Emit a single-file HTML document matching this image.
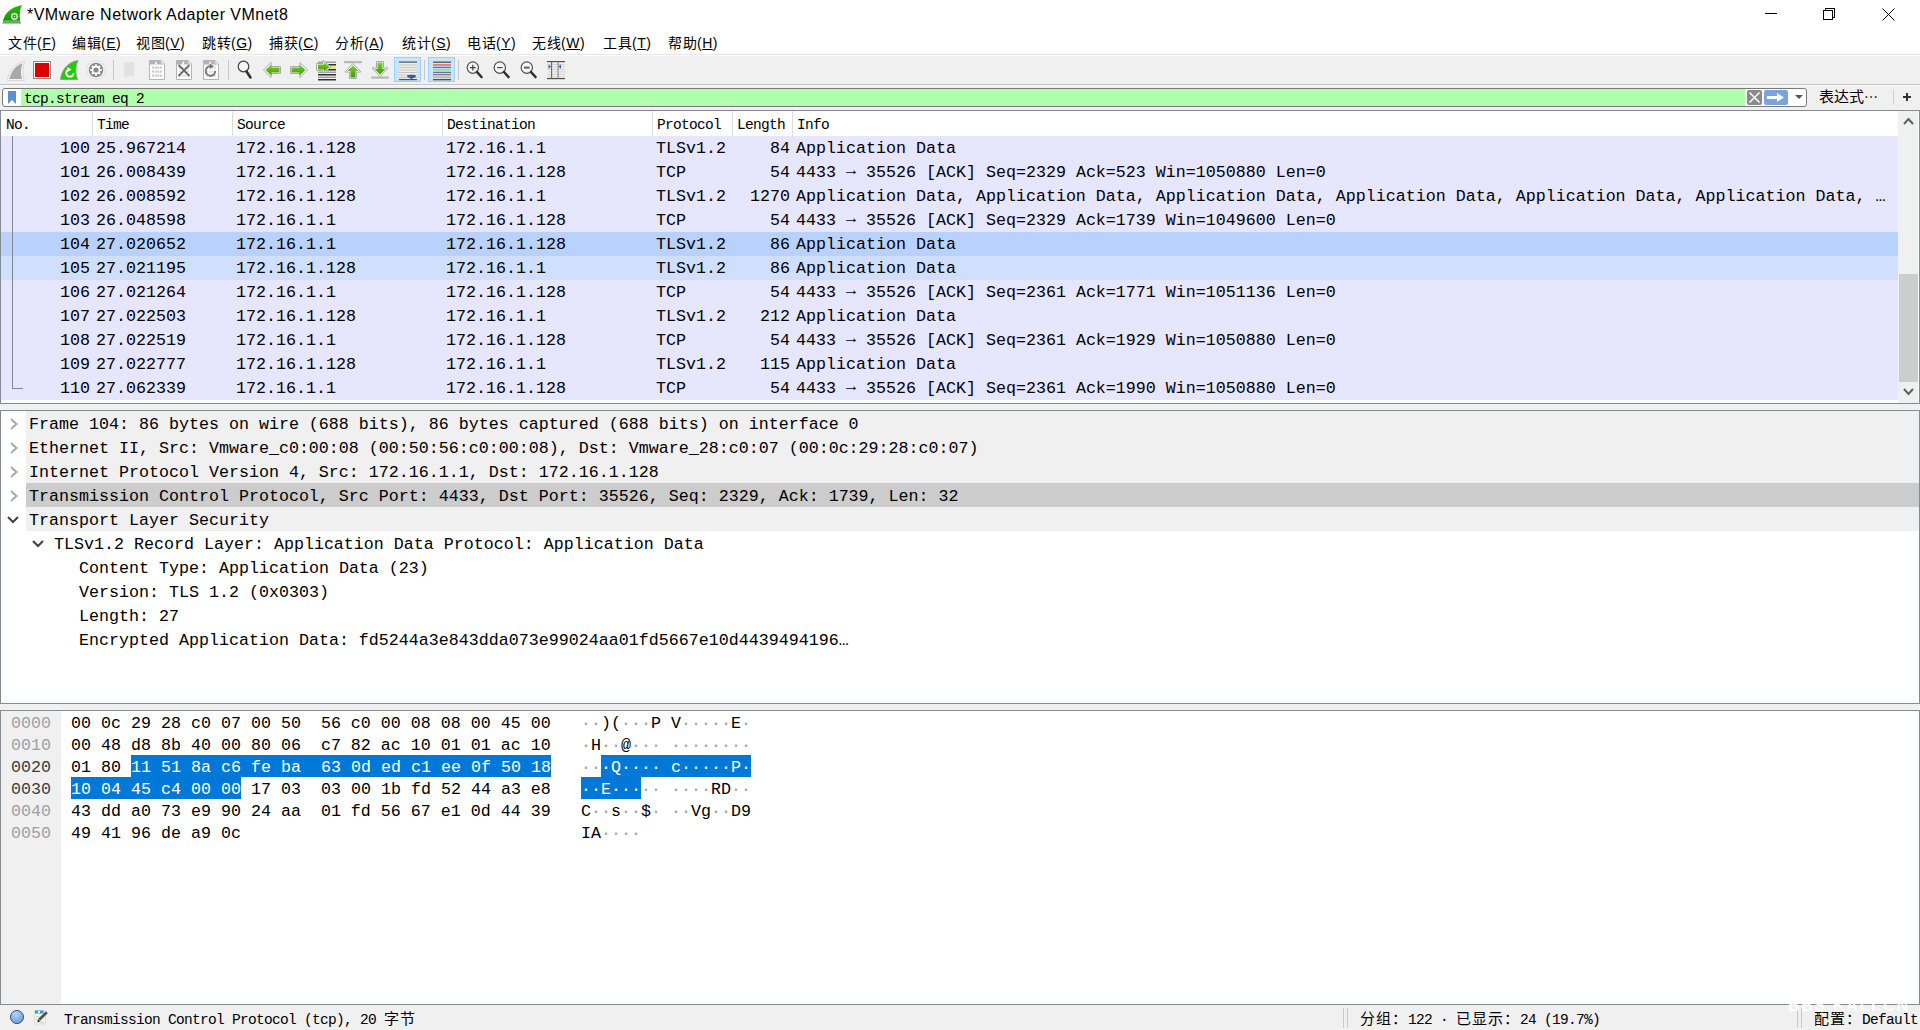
<!DOCTYPE html>
<html lang="zh-CN"><head><meta charset="utf-8"><title>Wireshark</title>
<style>
*{margin:0;padding:0;box-sizing:border-box}
html,body{width:1920px;height:1030px;overflow:hidden;background:#f0f0f0}
body{position:relative;font-family:"Liberation Sans",sans-serif;color:#000}
.a{position:absolute}
.mono{font-family:"Liberation Mono",monospace;font-size:16.664px;line-height:24px;white-space:pre}
.cj{font-size:15px;letter-spacing:1px}
.hdr{font-family:"Liberation Mono",monospace;font-size:14.5px;letter-spacing:-0.7px;line-height:24px;white-space:pre}
.menu span{position:absolute;top:31px;line-height:24px;font-size:14px;letter-spacing:0.5px;white-space:pre}
.menu u{text-decoration:underline;text-underline-offset:1px;text-decoration-thickness:1px}
.row{position:absolute;left:1px;width:1897px;height:24px;background:#e7e6ff}
.row div{position:absolute;top:1px}
.sep{position:absolute;width:1px;background:#dcdcdc}
.drow{position:absolute;left:1px;width:1918px;height:24px}
.hx{position:absolute;left:71px;height:22px;line-height:22px}
</style></head><body>

<div class="a" style="left:0;top:0;width:1920px;height:54px;background:#fff"></div>
<svg class="a" style="left:2px;top:4px" width="22" height="22" viewBox="0 0 22 22">
<defs><linearGradient id="lg" x1="0" y1="0" x2="0" y2="1"><stop offset="0" stop-color="#2cb80c"/><stop offset="0.82" stop-color="#169a06"/><stop offset="0.86" stop-color="#78c070"/><stop offset="1" stop-color="#5a9a50"/></linearGradient></defs>
<path d="M0.5 19.5 C1.5 11 7 3.5 20 1 C17.5 6 17 13 19 19.5 Z" fill="url(#lg)"/>
<circle cx="12.5" cy="12.5" r="2.8" fill="none" stroke="#cfe8cc" stroke-width="1.3"/>
<g fill="#cfe8cc"><rect x="12" y="8.8" width="1" height="7.4"/><rect x="8.8" y="12" width="7.4" height="1"/><rect x="12" y="8.8" width="1" height="7.4" transform="rotate(45 12.5 12.5)"/><rect x="12" y="8.8" width="1" height="7.4" transform="rotate(-45 12.5 12.5)"/></g>
<circle cx="12.5" cy="12.5" r="1.8" fill="#1e9a10"/><circle cx="12.5" cy="12.5" r="0.7" fill="#e8f6e8"/>
</svg>
<div class="a" style="left:27px;top:5px;font-size:16px;line-height:20px;letter-spacing:0.47px;white-space:pre">*VMware Network Adapter VMnet8</div>
<div class="a" style="left:1765px;top:13px;width:12px;height:1px;background:#000"></div>
<div class="a" style="left:1825px;top:8px;width:10px;height:10px;border:1px solid #000"></div>
<div class="a" style="left:1823px;top:10px;width:10px;height:10px;border:1px solid #000;background:#fff"></div>
<svg class="a" style="left:1882px;top:8px" width="13" height="13" viewBox="0 0 13 13"><path d="M0.5 0.5L12.5 12.5M12.5 0.5L0.5 12.5" stroke="#000" stroke-width="1"/></svg>

<div class="menu">
<span style="left:8px">文件(<u>F</u>)</span>
<span style="left:72px">编辑(<u>E</u>)</span>
<span style="left:136px">视图(<u>V</u>)</span>
<span style="left:202px">跳转(<u>G</u>)</span>
<span style="left:269px">捕获(<u>C</u>)</span>
<span style="left:335px">分析(<u>A</u>)</span>
<span style="left:402px">统计(<u>S</u>)</span>
<span style="left:467px">电话(<u>Y</u>)</span>
<span style="left:532px">无线(<u>W</u>)</span>
<span style="left:603px">工具(<u>T</u>)</span>
<span style="left:668px">帮助(<u>H</u>)</span>
</div>
<div class="a" style="left:0;top:54px;width:1920px;height:1px;background:#e8e8e8"></div>
<div class="a" style="left:0;top:55px;width:1920px;height:1px;background:#fcfcfc"></div>
<div class="a" style="left:0;top:56px;width:1920px;height:54px;background:#f0f0f0"></div>
<div class="a" style="left:0;top:84px;width:1920px;height:1px;background:#c4c4c4"></div>
<svg class="a" style="left:0;top:54px" width="580" height="32" viewBox="0 54 580 32">
<defs>
<linearGradient id="gg" x1="0" y1="0" x2="0" y2="1"><stop offset="0" stop-color="#7fcf2f"/><stop offset="1" stop-color="#3f9a00"/></linearGradient>
<linearGradient id="gh" x1="0" y1="0" x2="1" y2="0"><stop offset="0" stop-color="#4fa80a"/><stop offset="1" stop-color="#78c52a"/></linearGradient>
</defs>
<!-- 1 gray fin -->
<path d="M7.5 80.5 C8.5 71 15 63 25 61.5 C22.5 67 22 74 24.5 80.5 Z" fill="#f4f4f4" stroke="#d8d8d8" stroke-width="1"/>
<path d="M9.5 79 C11 71.5 16 65 22.5 63.5 C20.5 68.5 20.5 74 22 79 Z" fill="#a8a8a8"/>
<!-- 2 stop -->
<rect x="33.5" y="61.5" width="17" height="17" fill="#f8f8f8" stroke="#8a8a8a" stroke-width="1"/>
<rect x="35" y="63" width="14" height="14" fill="#dd0000"/>
<!-- 3 green fin -->
<path d="M60.5 79.5 C61.5 70 68 62 78 60.5 C75.5 66 75 73 77.5 79.5 Z" fill="#22cc00" stroke="#9a9a9a" stroke-width="1"/>
<path d="M73.5 73 A3.6 3.6 0 1 1 69 69.6" fill="none" stroke="#fff" stroke-width="1.8"/>
<path d="M67.5 67 L71.5 69.5 L67.5 72 Z" fill="#fff"/>
<!-- 4 gear -->
<circle cx="96" cy="70" r="9.3" fill="#f4f4f4" stroke="#d8d8d8" stroke-width="0.8"/>
<circle cx="96" cy="70" r="7.3" fill="#8a8a8a"/>
<g fill="#fff"><circle cx="96" cy="70" r="4.2"/>
<rect x="95" y="64.3" width="2" height="11.4"/><rect x="90.3" y="69" width="11.4" height="2"/>
<rect x="95" y="64.3" width="2" height="11.4" transform="rotate(45 96 70)"/><rect x="95" y="64.3" width="2" height="11.4" transform="rotate(-45 96 70)"/></g>
<circle cx="96" cy="70" r="2.6" fill="#8a8a8a"/>
<!-- sep -->
<rect x="113" y="60" width="1" height="20" fill="#c8c8c8"/>
<!-- 6 disabled folder -->
<path d="M124 62 H134 V76 H128 L124 78 Z" fill="#e2e2e2"/>
<!-- docs -->
<g><path d="M149.5 60.5 H161 L164.5 64 V79.5 H149.5 Z" fill="#fff" stroke="#b4b4b4" stroke-width="1"/><path d="M150 61 H160.8 L162.5 62.7 V64.5 H150 Z" fill="#b4b4b4"/><path d="M155 64.5 Q155 61.5 157 61.5 L157 64.5 Z" fill="#fff"/><path d="M161 60.5 V64 H164.5" fill="#e8e8e8" stroke="#c0c0c0" stroke-width="0.8"/><rect x="152.2" y="66.5" width="1.8" height="2.2" fill="#c4c4c4"/><rect x="154.79999999999998" y="66.5" width="1.8" height="2.2" fill="#c4c4c4"/><rect x="157.39999999999998" y="66.5" width="1.8" height="2.2" fill="#c4c4c4"/><rect x="160.0" y="66.5" width="1.8" height="2.2" fill="#c4c4c4"/><rect x="152.2" y="70.5" width="1.8" height="2.2" fill="#c4c4c4"/><rect x="154.79999999999998" y="70.5" width="1.8" height="2.2" fill="#c4c4c4"/><rect x="157.39999999999998" y="70.5" width="1.8" height="2.2" fill="#c4c4c4"/><rect x="160.0" y="70.5" width="1.8" height="2.2" fill="#c4c4c4"/><rect x="152.2" y="74.5" width="1.8" height="2.2" fill="#c4c4c4"/><rect x="154.79999999999998" y="74.5" width="1.8" height="2.2" fill="#c4c4c4"/><rect x="157.39999999999998" y="74.5" width="1.8" height="2.2" fill="#c4c4c4"/><rect x="160.0" y="74.5" width="1.8" height="2.2" fill="#c4c4c4"/></g>
<g><path d="M176.5 60.5 H188 L191.5 64 V79.5 H176.5 Z" fill="#fff" stroke="#b4b4b4" stroke-width="1"/><path d="M177 61 H187.8 L189.5 62.7 V64.5 H177 Z" fill="#b4b4b4"/><path d="M182 64.5 Q182 61.5 184 61.5 L184 64.5 Z" fill="#fff"/><path d="M188 60.5 V64 H191.5" fill="#e8e8e8" stroke="#c0c0c0" stroke-width="0.8"/><rect x="179.2" y="66.5" width="1.8" height="2.2" fill="#dadada"/><rect x="181.79999999999998" y="66.5" width="1.8" height="2.2" fill="#dadada"/><rect x="184.39999999999998" y="66.5" width="1.8" height="2.2" fill="#dadada"/><rect x="187.0" y="66.5" width="1.8" height="2.2" fill="#dadada"/><rect x="179.2" y="70.5" width="1.8" height="2.2" fill="#dadada"/><rect x="181.79999999999998" y="70.5" width="1.8" height="2.2" fill="#dadada"/><rect x="184.39999999999998" y="70.5" width="1.8" height="2.2" fill="#dadada"/><rect x="187.0" y="70.5" width="1.8" height="2.2" fill="#dadada"/><rect x="179.2" y="74.5" width="1.8" height="2.2" fill="#dadada"/><rect x="181.79999999999998" y="74.5" width="1.8" height="2.2" fill="#dadada"/><rect x="184.39999999999998" y="74.5" width="1.8" height="2.2" fill="#dadada"/><rect x="187.0" y="74.5" width="1.8" height="2.2" fill="#dadada"/><path d="M178.5 65 L189.5 76 M189.5 65 L178.5 76" stroke="#6a6a6a" stroke-width="1.8"/></g>
<g><path d="M203.5 60.5 H215 L218.5 64 V79.5 H203.5 Z" fill="#fff" stroke="#b4b4b4" stroke-width="1"/><path d="M204 61 H214.8 L216.5 62.7 V64.5 H204 Z" fill="#b4b4b4"/><path d="M209 64.5 Q209 61.5 211 61.5 L211 64.5 Z" fill="#fff"/><path d="M215 60.5 V64 H218.5" fill="#e8e8e8" stroke="#c0c0c0" stroke-width="0.8"/><rect x="206.2" y="66.5" width="1.8" height="2.2" fill="#dadada"/><rect x="208.79999999999998" y="66.5" width="1.8" height="2.2" fill="#dadada"/><rect x="211.39999999999998" y="66.5" width="1.8" height="2.2" fill="#dadada"/><rect x="214.0" y="66.5" width="1.8" height="2.2" fill="#dadada"/><rect x="206.2" y="70.5" width="1.8" height="2.2" fill="#dadada"/><rect x="208.79999999999998" y="70.5" width="1.8" height="2.2" fill="#dadada"/><rect x="211.39999999999998" y="70.5" width="1.8" height="2.2" fill="#dadada"/><rect x="214.0" y="70.5" width="1.8" height="2.2" fill="#dadada"/><rect x="206.2" y="74.5" width="1.8" height="2.2" fill="#dadada"/><rect x="208.79999999999998" y="74.5" width="1.8" height="2.2" fill="#dadada"/><rect x="211.39999999999998" y="74.5" width="1.8" height="2.2" fill="#dadada"/><rect x="214.0" y="74.5" width="1.8" height="2.2" fill="#dadada"/><path d="M215.3 71 A4.8 4.8 0 1 1 211.5 66.3" fill="none" stroke="#777" stroke-width="1.8"/><path d="M209.5 63.5 L214 66.2 L210 69 Z" fill="#777"/></g>
<rect x="228" y="60" width="1" height="20" fill="#c8c8c8"/>
<!-- 11 magnifier -->
<circle cx="243.5" cy="66.5" r="5.3" fill="#f6f6f6" stroke="#404040" stroke-width="1.2"/>
<path d="M246.5 71.5 L250.5 77.5" stroke="#303030" stroke-width="2.6" stroke-linecap="round"/>
<!-- 12 left arrow -->
<path d="M263.5 70 L271 62.5 V66.5 H280.5 V73.5 H271 V77.5 Z" fill="#fafafa" stroke="#aaa" stroke-width="1"/>
<path d="M265.5 70 L271.5 64.5 V67.5 H279.5 V72.5 H271.5 V75.5 Z" fill="url(#gg)"/>
<!-- 13 right arrow -->
<path d="M307.5 70 L300 62.5 V66.5 H290.5 V73.5 H300 V77.5 Z" fill="#fafafa" stroke="#aaa" stroke-width="1"/>
<path d="M305.5 70 L299.5 64.5 V67.5 H291.5 V72.5 H299.5 V75.5 Z" fill="url(#gg)"/>
<!-- 14 go to packet -->
<g>
<rect x="318" y="61.5" width="18" height="1.5" fill="#a0a0a0"/>
<rect x="318" y="64" width="18" height="1.5" fill="#303030"/>
<rect x="330" y="66.5" width="6" height="2" fill="#f0e040"/>
<rect x="318" y="69" width="18" height="1.5" fill="#303030"/>
<rect x="318" y="71.5" width="18" height="1.5" fill="#a0a0a0"/>
<rect x="318" y="74" width="18" height="1.5" fill="#303030"/>
<rect x="318" y="76.5" width="18" height="1.5" fill="#a0a0a0"/>
<rect x="318" y="79" width="18" height="1.5" fill="#303030"/>
<path d="M316.5 63.5 H323 V60.5 L331 67 L323 73.5 V70.5 H316.5 Z" fill="#fafafa" stroke="#aaa" stroke-width="1"/>
<path d="M318 64.5 H324 V62.5 L329.5 67 L324 71.5 V69.5 H318 Z" fill="url(#gg)"/>
</g>
<!-- 15 to top -->
<rect x="344" y="61" width="18" height="2.2" rx="1" fill="#b8b8b8"/>
<path d="M353 63.5 L361 72 H356.5 V78.5 H349.5 V72 H345 Z" fill="#fafafa" stroke="#aaa" stroke-width="1"/>
<path d="M353 65.5 L358.5 71 H355.5 V77.5 H350.5 V71 H347.5 Z" fill="url(#gg)"/>
<!-- 16 to bottom -->
<rect x="371" y="76.5" width="18" height="2.2" rx="1" fill="#b8b8b8"/>
<path d="M380 76.5 L388 68 H383.5 V61.5 H376.5 V68 H372 Z" fill="#fafafa" stroke="#aaa" stroke-width="1"/>
<path d="M380 74.5 L385.5 69 H382.5 V62.5 H377.5 V69 H374.5 Z" fill="url(#gg)"/>
<!-- 17 autoscroll pressed -->
<rect x="394.5" y="57.5" width="26" height="24" fill="#cce4f7" stroke="#99d1ff" stroke-width="1"/>
<g>
<rect x="399" y="61.5" width="18" height="1.2" fill="#505050"/>
<rect x="399" y="63" width="18" height="16" fill="#f0f0ea"/>
<g fill="#c4c4bc"><rect x="399" y="64.5" width="18" height="1"/><rect x="399" y="67" width="18" height="1"/><rect x="399" y="69.5" width="18" height="1"/><rect x="399" y="72" width="18" height="1"/><rect x="399" y="74.5" width="18" height="1"/><rect x="399" y="77" width="18" height="1"/></g>
<rect x="399" y="79" width="18" height="1.2" fill="#505050"/>
<path d="M407 76 Q407 74.8 411.5 74.8 Q416 74.8 416 76 Q416 77.5 412.5 78.2 L412.5 80 H410.5 L410.5 78.2 Q407 77.5 407 76 Z" fill="#2e5fa8"/>
</g>
<rect x="424" y="60" width="1" height="20" fill="#c8c8c8"/>
<!-- 19 colorize pressed -->
<rect x="428.5" y="57.5" width="26" height="24" fill="#cce4f7" stroke="#99d1ff" stroke-width="1"/>
<rect x="433" y="61.5" width="18" height="1.3" fill="#505050"/>
<rect x="433" y="64.3" width="18" height="1.3" fill="#ee5050"/>
<rect x="433" y="66.8" width="18" height="1.3" fill="#4a78c0"/>
<rect x="433" y="69.3" width="18" height="1.3" fill="#8ee050"/>
<rect x="433" y="71.8" width="18" height="1.3" fill="#4a78c0"/>
<rect x="433" y="74" width="18" height="1.3" fill="#9a70a8"/>
<rect x="433" y="76.5" width="18" height="1.3" fill="#d8b040"/>
<rect x="433" y="79" width="18" height="1.3" fill="#505050"/>
<rect x="458" y="60" width="1" height="20" fill="#c8c8c8"/>
<!-- 21 zoom in -->
<circle cx="472.8" cy="67.6" r="5.7" fill="#f4f4f4" stroke="#505050" stroke-width="1.2"/>
<path d="M470 67.6 H475.6 M472.8 64.8 V70.4" stroke="#404040" stroke-width="1.2"/>
<path d="M477 72 L481.5 77" stroke="#303030" stroke-width="2.6" stroke-linecap="round"/>
<!-- 22 zoom out -->
<circle cx="499.8" cy="67.6" r="5.7" fill="#f4f4f4" stroke="#505050" stroke-width="1.2"/>
<path d="M497 67.6 H502.6" stroke="#505050" stroke-width="1.2"/>
<path d="M504 72 L508.5 77" stroke="#303030" stroke-width="2.6" stroke-linecap="round"/>
<!-- 23 normal -->
<circle cx="526.8" cy="67.6" r="5.7" fill="#f4f4f4" stroke="#505050" stroke-width="1.2"/>
<rect x="524" y="66.6" width="5.6" height="2" fill="#606060"/>
<path d="M531 72 L535.5 77" stroke="#303030" stroke-width="2.6" stroke-linecap="round"/>
<!-- 24 resize columns -->
<rect x="547" y="61.5" width="18" height="17" fill="#f0f0ea"/>
<g fill="#d0d0c8"><rect x="547" y="64" width="18" height="0.8"/><rect x="547" y="66.5" width="18" height="0.8"/><rect x="547" y="69" width="18" height="0.8"/><rect x="547" y="71.5" width="18" height="0.8"/><rect x="547" y="74" width="18" height="0.8"/><rect x="547" y="76.5" width="18" height="0.8"/></g>
<rect x="547" y="61" width="18" height="1.2" fill="#505050"/>
<rect x="547" y="78" width="18" height="1.2" fill="#505050"/>
<rect x="551.2" y="61" width="0.9" height="18" fill="#505050"/>
<rect x="557.6" y="61" width="0.9" height="18" fill="#707070"/>
<path d="M548.5 64.5 L551 66.5 L548.5 69 Z" fill="#2e68c0"/>
<path d="M561 64.5 L558.5 66.5 L561 69 Z" fill="#2e68c0"/>
</svg>

<div class="a" style="left:0;top:85px;width:1920px;height:1px;background:#fafafa"></div>
<div class="a" style="left:2px;top:88px;width:1805px;height:19px;border:1px solid #7a7a7a;border-radius:3px;background:#fff;overflow:hidden">
<div class="a" style="left:18px;top:0;width:1724px;height:17px;background:#afffaf"></div>
<svg class="a" style="left:4px;top:1px" width="10" height="16" viewBox="0 0 10 16"><path d="M1 1H9V14L5 10L1 14Z" fill="#5b8fcf"/></svg>
<div class="a hdr" style="left:21px;top:-2px">tcp.stream eq 2</div>
<div class="a" style="left:1744px;top:1px;width:15px;height:15px;background:#8a8a8a;border-radius:2px"></div>
<svg class="a" style="left:1744px;top:1px" width="15" height="15" viewBox="0 0 15 15"><path d="M2.5 2.5L12.5 12.5M12.5 2.5L2.5 12.5" stroke="#fff" stroke-width="1.5"/></svg>
<div class="a" style="left:1761px;top:1px;width:24px;height:15px;background:#79a5dc;border-radius:2px"></div>
<svg class="a" style="left:1761px;top:1px" width="24" height="15" viewBox="0 0 24 15"><path d="M3 6H13V3L20 7.5L13 12V9H3Z" fill="#fff"/></svg>
<svg class="a" style="left:1792px;top:6px" width="8" height="5" viewBox="0 0 8 5"><path d="M0 0H8L4 4Z" fill="#555"/></svg>
</div>
<div class="a" style="left:1819px;top:86px;font-size:15px;line-height:22px;white-space:pre">表达式<span style="font-size:14px">⋯</span></div>
<div class="a" style="left:1893px;top:90px;width:1px;height:15px;background:#d0d0d0"></div>
<svg class="a" style="left:1902px;top:92px" width="10" height="10" viewBox="0 0 10 10"><path d="M5 1V9M1 5H9" stroke="#333" stroke-width="2"/></svg>

<div class="a" style="left:0;top:110px;width:1920px;height:294px;border:1px solid #868a91;background:#fff"></div>
<div class="a hdr" style="left:6px;top:113px">No.</div>
<div class="a hdr" style="left:97px;top:113px">Time</div>
<div class="sep" style="left:92px;top:111px;height:25px"></div>
<div class="a hdr" style="left:237px;top:113px">Source</div>
<div class="sep" style="left:232px;top:111px;height:25px"></div>
<div class="a hdr" style="left:447px;top:113px">Destination</div>
<div class="sep" style="left:442px;top:111px;height:25px"></div>
<div class="a hdr" style="left:657px;top:113px">Protocol</div>
<div class="sep" style="left:652px;top:111px;height:25px"></div>
<div class="a hdr" style="left:737px;top:113px">Length</div>
<div class="sep" style="left:732px;top:111px;height:25px"></div>
<div class="a hdr" style="left:797px;top:113px">Info</div>
<div class="sep" style="left:792px;top:111px;height:25px"></div>
<div class="row mono" style="top:136px;background:#e7e6ff">
<div style="right:1808px">100</div>
<div style="left:95px">25.967214</div>
<div style="left:235px">172.16.1.128</div>
<div style="left:445px">172.16.1.1</div>
<div style="left:655px">TLSv1.2</div>
<div style="right:1108px">84</div>
<div style="left:795px">Application Data</div>
</div>
<div class="row mono" style="top:160px;background:#e7e6ff">
<div style="right:1808px">101</div>
<div style="left:95px">26.008439</div>
<div style="left:235px">172.16.1.1</div>
<div style="left:445px">172.16.1.128</div>
<div style="left:655px">TCP</div>
<div style="right:1108px">54</div>
<div style="left:795px">4433 <span style="position:relative;top:-2px">→</span> 35526 [ACK] Seq=2329 Ack=523 Win=1050880 Len=0</div>
</div>
<div class="row mono" style="top:184px;background:#e7e6ff">
<div style="right:1808px">102</div>
<div style="left:95px">26.008592</div>
<div style="left:235px">172.16.1.128</div>
<div style="left:445px">172.16.1.1</div>
<div style="left:655px">TLSv1.2</div>
<div style="right:1108px">1270</div>
<div style="left:795px">Application Data, Application Data, Application Data, Application Data, Application Data, Application Data, …</div>
</div>
<div class="row mono" style="top:208px;background:#e7e6ff">
<div style="right:1808px">103</div>
<div style="left:95px">26.048598</div>
<div style="left:235px">172.16.1.1</div>
<div style="left:445px">172.16.1.128</div>
<div style="left:655px">TCP</div>
<div style="right:1108px">54</div>
<div style="left:795px">4433 <span style="position:relative;top:-2px">→</span> 35526 [ACK] Seq=2329 Ack=1739 Win=1049600 Len=0</div>
</div>
<div class="row mono" style="top:232px;background:#b9d2fd">
<div style="right:1808px">104</div>
<div style="left:95px">27.020652</div>
<div style="left:235px">172.16.1.1</div>
<div style="left:445px">172.16.1.128</div>
<div style="left:655px">TLSv1.2</div>
<div style="right:1108px">86</div>
<div style="left:795px">Application Data</div>
</div>
<div class="row mono" style="top:256px;background:#cfdffd">
<div style="right:1808px">105</div>
<div style="left:95px">27.021195</div>
<div style="left:235px">172.16.1.128</div>
<div style="left:445px">172.16.1.1</div>
<div style="left:655px">TLSv1.2</div>
<div style="right:1108px">86</div>
<div style="left:795px">Application Data</div>
</div>
<div class="row mono" style="top:280px;background:#e7e6ff">
<div style="right:1808px">106</div>
<div style="left:95px">27.021264</div>
<div style="left:235px">172.16.1.1</div>
<div style="left:445px">172.16.1.128</div>
<div style="left:655px">TCP</div>
<div style="right:1108px">54</div>
<div style="left:795px">4433 <span style="position:relative;top:-2px">→</span> 35526 [ACK] Seq=2361 Ack=1771 Win=1051136 Len=0</div>
</div>
<div class="row mono" style="top:304px;background:#e7e6ff">
<div style="right:1808px">107</div>
<div style="left:95px">27.022503</div>
<div style="left:235px">172.16.1.128</div>
<div style="left:445px">172.16.1.1</div>
<div style="left:655px">TLSv1.2</div>
<div style="right:1108px">212</div>
<div style="left:795px">Application Data</div>
</div>
<div class="row mono" style="top:328px;background:#e7e6ff">
<div style="right:1808px">108</div>
<div style="left:95px">27.022519</div>
<div style="left:235px">172.16.1.1</div>
<div style="left:445px">172.16.1.128</div>
<div style="left:655px">TCP</div>
<div style="right:1108px">54</div>
<div style="left:795px">4433 <span style="position:relative;top:-2px">→</span> 35526 [ACK] Seq=2361 Ack=1929 Win=1050880 Len=0</div>
</div>
<div class="row mono" style="top:352px;background:#e7e6ff">
<div style="right:1808px">109</div>
<div style="left:95px">27.022777</div>
<div style="left:235px">172.16.1.128</div>
<div style="left:445px">172.16.1.1</div>
<div style="left:655px">TLSv1.2</div>
<div style="right:1108px">115</div>
<div style="left:795px">Application Data</div>
</div>
<div class="row mono" style="top:376px;background:#e7e6ff">
<div style="right:1808px">110</div>
<div style="left:95px">27.062339</div>
<div style="left:235px">172.16.1.1</div>
<div style="left:445px">172.16.1.128</div>
<div style="left:655px">TCP</div>
<div style="right:1108px">54</div>
<div style="left:795px">4433 <span style="position:relative;top:-2px">→</span> 35526 [ACK] Seq=2361 Ack=1990 Win=1050880 Len=0</div>
</div>
<div class="a" style="left:12px;top:136px;width:1px;height:253px;background:#7f888f"></div>
<div class="a" style="left:12px;top:388px;width:11px;height:1px;background:#7f888f"></div>
<div class="a" style="left:1898px;top:111px;width:20px;height:292px;background:#f0f0f0"></div>
<div class="a" style="left:1899px;top:274px;width:19px;height:108px;background:#cdcdcd"></div>
<svg class="a" style="left:1903px;top:117px" width="11" height="8" viewBox="0 0 11 8"><path d="M1 7L5.5 2L10 7" fill="none" stroke="#606060" stroke-width="2"/></svg>
<svg class="a" style="left:1903px;top:388px" width="11" height="8" viewBox="0 0 11 8"><path d="M1 1L5.5 6L10 1" fill="none" stroke="#606060" stroke-width="2"/></svg>
<div class="a" style="left:0;top:410px;width:1920px;height:294px;border:1px solid #868a91;background:#fff"></div>
<div class="a" style="left:26px;top:411px;width:1893px;height:24px;background:#f0f0f0"></div>
<svg class="a" style="left:10px;top:418px" width="8" height="12" viewBox="0 0 8 12"><path d="M1 1L6.5 6L1 11" fill="none" stroke="#a8a8a8" stroke-width="2"/></svg>
<div class="a mono" style="left:29px;top:413px">Frame 104: 86 bytes on wire (688 bits), 86 bytes captured (688 bits) on interface 0</div>
<div class="a" style="left:26px;top:435px;width:1893px;height:24px;background:#f0f0f0"></div>
<svg class="a" style="left:10px;top:442px" width="8" height="12" viewBox="0 0 8 12"><path d="M1 1L6.5 6L1 11" fill="none" stroke="#a8a8a8" stroke-width="2"/></svg>
<div class="a mono" style="left:29px;top:437px">Ethernet II, Src: Vmware_c0:00:08 (00:50:56:c0:00:08), Dst: Vmware_28:c0:07 (00:0c:29:28:c0:07)</div>
<div class="a" style="left:26px;top:459px;width:1893px;height:24px;background:#f0f0f0"></div>
<svg class="a" style="left:10px;top:466px" width="8" height="12" viewBox="0 0 8 12"><path d="M1 1L6.5 6L1 11" fill="none" stroke="#a8a8a8" stroke-width="2"/></svg>
<div class="a mono" style="left:29px;top:461px">Internet Protocol Version 4, Src: 172.16.1.1, Dst: 172.16.1.128</div>
<div class="a" style="left:26px;top:483px;width:1893px;height:24px;background:#cccccc"></div>
<svg class="a" style="left:10px;top:490px" width="8" height="12" viewBox="0 0 8 12"><path d="M1 1L6.5 6L1 11" fill="none" stroke="#a8a8a8" stroke-width="2"/></svg>
<div class="a mono" style="left:29px;top:485px">Transmission Control Protocol, Src Port: 4433, Dst Port: 35526, Seq: 2329, Ack: 1739, Len: 32</div>
<div class="a" style="left:26px;top:507px;width:1893px;height:24px;background:#f0f0f0"></div>
<svg class="a" style="left:7px;top:516px" width="12" height="8" viewBox="0 0 12 8"><path d="M1 1L6 6L11 1" fill="none" stroke="#404040" stroke-width="2"/></svg>
<div class="a mono" style="left:29px;top:509px">Transport Layer Security</div>
<svg class="a" style="left:32px;top:540px" width="12" height="8" viewBox="0 0 12 8"><path d="M1 1L6 6L11 1" fill="none" stroke="#404040" stroke-width="2"/></svg>
<div class="a mono" style="left:54px;top:533px">TLSv1.2 Record Layer: Application Data Protocol: Application Data</div>
<div class="a mono" style="left:79px;top:557px">Content Type: Application Data (23)</div>
<div class="a mono" style="left:79px;top:581px">Version: TLS 1.2 (0x0303)</div>
<div class="a mono" style="left:79px;top:605px">Length: 27</div>
<div class="a mono" style="left:79px;top:629px">Encrypted Application Data: fd5244a3e843dda073e99024aa01fd5667e10d4439494196…</div>
<div class="a" style="left:0;top:710px;width:1920px;height:295px;border:1px solid #868a91;background:#fff"></div>
<div class="a" style="left:1px;top:711px;width:60px;height:293px;background:#f0f0f0"></div>
<div class="a" style="left:131px;top:755px;width:420px;height:22px;background:#0078d7"></div>
<div class="a" style="left:71px;top:777px;width:170px;height:22px;background:#0078d7"></div>
<div class="a" style="left:601px;top:755px;width:150px;height:22px;background:#0078d7"></div>
<div class="a" style="left:581px;top:777px;width:60px;height:22px;background:#0078d7"></div>
<div class="a mono" style="left:11px;top:713px;line-height:22px;color:#a0a0a0">0000</div>
<div class="a mono" style="left:71px;top:713px;line-height:22px">00 0c 29 28 c0 07 00 50  56 c0 00 08 08 00 45 00</div>
<div class="a mono" style="left:581px;top:713px;line-height:22px"><span style="color:#a0a0a0">·</span><span style="color:#a0a0a0">·</span><span style="color:#000">)</span><span style="color:#000">(</span><span style="color:#a0a0a0">·</span><span style="color:#a0a0a0">·</span><span style="color:#a0a0a0">·</span><span style="color:#000">P</span> <span style="color:#000">V</span><span style="color:#a0a0a0">·</span><span style="color:#a0a0a0">·</span><span style="color:#a0a0a0">·</span><span style="color:#a0a0a0">·</span><span style="color:#a0a0a0">·</span><span style="color:#000">E</span><span style="color:#a0a0a0">·</span></div>
<div class="a mono" style="left:11px;top:735px;line-height:22px;color:#a0a0a0">0010</div>
<div class="a mono" style="left:71px;top:735px;line-height:22px">00 48 d8 8b 40 00 80 06  c7 82 ac 10 01 01 ac 10</div>
<div class="a mono" style="left:581px;top:735px;line-height:22px"><span style="color:#a0a0a0">·</span><span style="color:#000">H</span><span style="color:#a0a0a0">·</span><span style="color:#a0a0a0">·</span><span style="color:#000">@</span><span style="color:#a0a0a0">·</span><span style="color:#a0a0a0">·</span><span style="color:#a0a0a0">·</span> <span style="color:#a0a0a0">·</span><span style="color:#a0a0a0">·</span><span style="color:#a0a0a0">·</span><span style="color:#a0a0a0">·</span><span style="color:#a0a0a0">·</span><span style="color:#a0a0a0">·</span><span style="color:#a0a0a0">·</span><span style="color:#a0a0a0">·</span></div>
<div class="a mono" style="left:11px;top:757px;line-height:22px;color:#3c3c3c">0020</div>
<div class="a mono" style="left:71px;top:757px;line-height:22px">01 80 <span style="color:#fff">11</span> <span style="color:#fff">51</span> <span style="color:#fff">8a</span> <span style="color:#fff">c6</span> <span style="color:#fff">fe</span> <span style="color:#fff">ba</span>  <span style="color:#fff">63</span> <span style="color:#fff">0d</span> <span style="color:#fff">ed</span> <span style="color:#fff">c1</span> <span style="color:#fff">ee</span> <span style="color:#fff">0f</span> <span style="color:#fff">50</span> <span style="color:#fff">18</span></div>
<div class="a mono" style="left:581px;top:757px;line-height:22px"><span style="color:#a0a0a0">·</span><span style="color:#a0a0a0">·</span><span style="color:#fff">·</span><span style="color:#fff">Q</span><span style="color:#fff">·</span><span style="color:#fff">·</span><span style="color:#fff">·</span><span style="color:#fff">·</span> <span style="color:#fff">c</span><span style="color:#fff">·</span><span style="color:#fff">·</span><span style="color:#fff">·</span><span style="color:#fff">·</span><span style="color:#fff">·</span><span style="color:#fff">P</span><span style="color:#fff">·</span></div>
<div class="a mono" style="left:11px;top:779px;line-height:22px;color:#3c3c3c">0030</div>
<div class="a mono" style="left:71px;top:779px;line-height:22px"><span style="color:#fff">10</span> <span style="color:#fff">04</span> <span style="color:#fff">45</span> <span style="color:#fff">c4</span> <span style="color:#fff">00</span> <span style="color:#fff">00</span> 17 03  03 00 1b fd 52 44 a3 e8</div>
<div class="a mono" style="left:581px;top:779px;line-height:22px"><span style="color:#fff">·</span><span style="color:#fff">·</span><span style="color:#fff">E</span><span style="color:#fff">·</span><span style="color:#fff">·</span><span style="color:#fff">·</span><span style="color:#a0a0a0">·</span><span style="color:#a0a0a0">·</span> <span style="color:#a0a0a0">·</span><span style="color:#a0a0a0">·</span><span style="color:#a0a0a0">·</span><span style="color:#a0a0a0">·</span><span style="color:#000">R</span><span style="color:#000">D</span><span style="color:#a0a0a0">·</span><span style="color:#a0a0a0">·</span></div>
<div class="a mono" style="left:11px;top:801px;line-height:22px;color:#a0a0a0">0040</div>
<div class="a mono" style="left:71px;top:801px;line-height:22px">43 dd a0 73 e9 90 24 aa  01 fd 56 67 e1 0d 44 39</div>
<div class="a mono" style="left:581px;top:801px;line-height:22px"><span style="color:#000">C</span><span style="color:#a0a0a0">·</span><span style="color:#a0a0a0">·</span><span style="color:#000">s</span><span style="color:#a0a0a0">·</span><span style="color:#a0a0a0">·</span><span style="color:#000">$</span><span style="color:#a0a0a0">·</span> <span style="color:#a0a0a0">·</span><span style="color:#a0a0a0">·</span><span style="color:#000">V</span><span style="color:#000">g</span><span style="color:#a0a0a0">·</span><span style="color:#a0a0a0">·</span><span style="color:#000">D</span><span style="color:#000">9</span></div>
<div class="a mono" style="left:11px;top:823px;line-height:22px;color:#a0a0a0">0050</div>
<div class="a mono" style="left:71px;top:823px;line-height:22px">49 41 96 de a9 0c</div>
<div class="a mono" style="left:581px;top:823px;line-height:22px"><span style="color:#000">I</span><span style="color:#000">A</span><span style="color:#a0a0a0">·</span><span style="color:#a0a0a0">·</span><span style="color:#a0a0a0">·</span><span style="color:#a0a0a0">·</span></div>
<div class="a" style="left:0;top:1005px;width:1920px;height:25px;background:#f0f0f0"></div>
<svg class="a" style="left:9px;top:1009px" width="16" height="16" viewBox="0 0 16 16"><defs><radialGradient id="g1" cx="40%" cy="30%" r="70%"><stop offset="0" stop-color="#b8d4f4"/><stop offset="1" stop-color="#6a9ad8"/></radialGradient></defs><circle cx="8" cy="8" r="6.6" fill="url(#g1)" stroke="#3d5a80" stroke-width="1"/></svg>
<svg class="a" style="left:34px;top:1010px" width="15" height="15" viewBox="0 0 15 15"><rect x="0.5" y="0.5" width="11" height="13.5" fill="#f4f4ee" stroke="#deded6"/><rect x="1" y="0.5" width="8.5" height="3" fill="#2a9ad8"/><rect x="4" y="1" width="2" height="2" fill="#e8f4fa"/><g fill="#cfcfc8"><rect x="2" y="6" width="3" height="0.9"/><rect x="2" y="9" width="2" height="0.9"/><rect x="6" y="12" width="4" height="0.9"/></g><path d="M5.2 9.8 L12.8 2.2" stroke="#505050" stroke-width="2.8"/><path d="M3.3 12.2 L4.1 9.2 L6.3 11.4 Z" fill="#202020"/></svg>
<div class="a hdr" style="left:64px;top:1008px">Transmission Control Protocol (tcp), 20 <span class="cj">字节</span></div>
<div class="a" style="left:1343px;top:1008px;width:1px;height:20px;background:#c8c8c8"></div>
<div class="a" style="left:1347px;top:1008px;width:1px;height:20px;background:#c8c8c8"></div>
<div class="a hdr" style="left:1360px;top:1008px"><span class="cj">分组：</span>122 · <span class="cj">已显示：</span>24 (19.7%)</div>
<div class="a" style="left:1797px;top:1008px;width:1px;height:20px;background:#c8c8c8"></div>
<div class="a" style="left:1801px;top:1008px;width:1px;height:20px;background:#c8c8c8"></div>
<div class="a hdr" style="left:1814px;top:1008px"><span class="cj">配置：</span>Default</div>
<div class="a" style="left:1788px;top:996px;font-size:16px;line-height:20px;font-weight:bold;letter-spacing:1.7px;color:rgba(255,255,255,0.9);white-space:pre">BBS.KALI.CN</div>
</body></html>
